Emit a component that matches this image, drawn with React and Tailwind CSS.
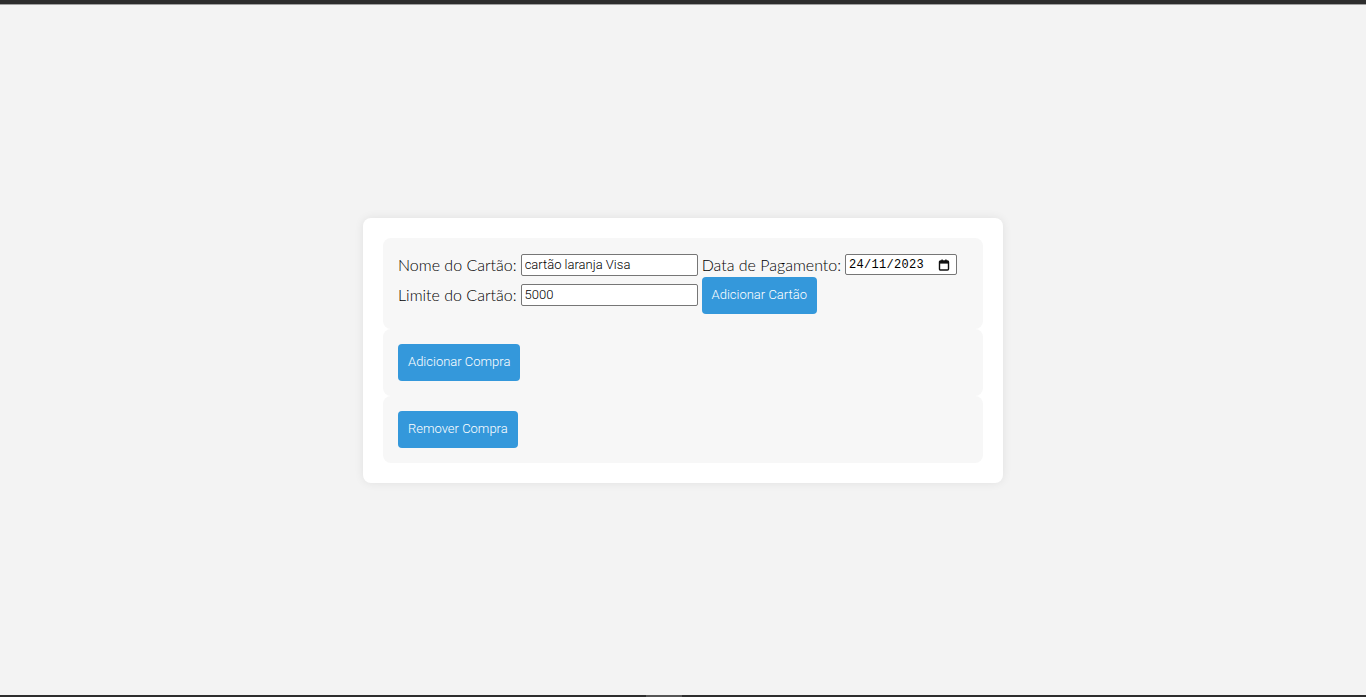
import { useState } from "react";

const CalendarIcon = () => (
  <svg width="12" height="12" viewBox="0 0 12 12" fill="none">
    <rect x="1.5" y="2" width="9" height="9" rx="1" stroke="#111" strokeWidth="1.4" />
    <rect x="1.5" y="2" width="9" height="2.6" fill="#111" />
    <rect x="3.4" y="0.5" width="1.4" height="2" fill="#111" />
    <rect x="7.2" y="0.5" width="1.4" height="2" fill="#111" />
  </svg>
);

const Section = ({ children }) => (
  <div className="bg-[#f7f7f7] rounded-lg p-[15px]">{children}</div>
);

const BlueButton = ({ children }) => (
  <button className="bg-[#3498db] text-white text-[13px] h-[37px] px-2.5 rounded-[4px] font-['Roboto',sans-serif] font-light cursor-pointer">
    {children}
  </button>
);

export default function App() {
  const [nome, setNome] = useState("cartão laranja Visa");
  const [limite, setLimite] = useState("5000");

  return (
    <div className="min-h-[697px] flex flex-col bg-[#f3f3f3] font-['Lato',sans-serif] text-black">
      {/* window chrome strip */}
      <div className="h-1 bg-[#2d2d2d]" />
      <div className="h-px bg-[#a0a0a0]" />

      <main className="flex-1 flex items-center justify-center">
        <div className="w-[640px] bg-white rounded-lg p-5 shadow-[0_0_10px_rgba(0,0,0,0.08)]">
          <Section>
            <div className="flex flex-wrap items-center gap-x-1 text-[16px] font-light leading-6">
              <span>Nome do Cartão:</span>
              <input
                value={nome}
                onChange={(e) => setNome(e.target.value)}
                className="w-[177px] h-[22px] border border-[#767676] rounded-[2px] px-[3px] text-[13px] bg-white text-black font-['Roboto',sans-serif]"
              />
              <span>Data de Pagamento:</span>
              <div className="relative w-[112px] h-[21px] border border-[#767676] rounded-[2px] bg-white flex items-center">
                <span className="pl-[3px] text-[12px] font-['Liberation_Mono',monospace] text-black tracking-[0.3px]">
                  24/11/2023
                </span>
                <span className="absolute right-[6px] top-[4px]">
                  <CalendarIcon />
                </span>
              </div>
              <span>Limite do Cartão:</span>
              <input
                value={limite}
                onChange={(e) => setLimite(e.target.value)}
                className="w-[177px] h-[22px] border border-[#767676] rounded-[2px] px-[3px] text-[13px] bg-white text-black font-['Roboto',sans-serif]"
              />
              <BlueButton>Adicionar Cartão</BlueButton>
            </div>
          </Section>
          <Section>
            <BlueButton>Adicionar Compra</BlueButton>
          </Section>
          <Section>
            <BlueButton>Remover Compra</BlueButton>
          </Section>
        </div>
      </main>

      <div className="h-[2px] bg-[#2d2d2d] flex pl-[646px]">
        <div className="w-9 bg-[#555]" />
      </div>
    </div>
  );
}
